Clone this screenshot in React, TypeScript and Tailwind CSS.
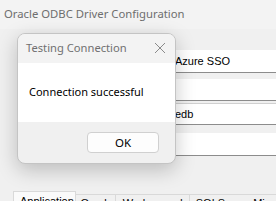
export default function App() {
  return (
    <div className="relative w-[276px] h-[201px] overflow-hidden bg-[#f0f0f0]">
      <div className="h-[29px] flex items-center pl-[4px] bg-[#f3f3f3] text-[11.3px] text-[#6e6e6e] font-['Noto_Sans',sans-serif] whitespace-nowrap">
        Oracle ODBC Driver Configuration
      </div>
      <div className="ml-[120px] mt-[21px] flex flex-col font-['Liberation_Sans',sans-serif] text-[11px] text-black leading-none">
        <div className="h-[23px] bg-white border-b border-[#8c8c8c] flex items-center pl-[55px]">Azure SSO</div>
        <div className="mt-[6px] h-[22px] bg-white border-b border-[#8c8c8c]" />
        <div className="mt-[2px] h-[22px] bg-white border-t border-t-[#d0d0d0] border-b border-[#8c8c8c] flex items-center pl-[55px]">edb</div>
        <div className="mt-[8px] h-[23px] bg-white border-b border-[#8c8c8c]" />
      </div>
      <div className="mt-[35px] pl-[13px] flex items-start font-['Liberation_Sans',sans-serif] text-[11px] text-black leading-[13px] whitespace-nowrap">
        <div className="w-[66px] h-[12px] overflow-hidden border-t border-x border-[#d9d9d9] bg-[#fafafa] pl-[6px] pt-[3px]">Application</div>
        <div className="mt-[3px] w-[41px] h-[9px] overflow-hidden border-t border-r border-[#d9d9d9] pl-[4px] pt-[2px]">Oracle</div>
        <div className="mt-[3px] w-[77px] h-[9px] overflow-hidden border-t border-r border-[#d9d9d9] pl-[7px] pt-[2px]">Workarounds</div>
        <div className="mt-[3px] w-[90px] h-[9px] overflow-hidden border-t border-[#d9d9d9] pl-[6px] pt-[2px]">SQLServer Migration</div>
      </div>

      <div className="absolute left-[17px] top-[33px] w-[159px] h-[131px] rounded-[8px] overflow-hidden border border-[#c4c4c4] bg-[#f0f0f0] shadow-[0_6px_20px_rgba(0,0,0,0.22)] flex flex-col font-['Noto_Sans',sans-serif]">
        <div className="relative h-[29px] flex items-center pl-[8px] text-[11.2px] text-[#707070] bg-[#f3f3f3]">
          Testing Connection
          <svg className="absolute left-[136px] top-[8px]" width="12" height="12" viewBox="0 0 12 12">
            <path d="M1 1 L11 11 M11 1 L1 11" stroke="#8a8a8a" strokeWidth="1" fill="none" />
          </svg>
        </div>
        <div className="h-[59px] bg-white flex items-center pl-[11px] text-[11px] text-black">Connection successful</div>
        <div className="flex-1 flex justify-end items-start pt-[10px] pr-[16px]">
          <div className="w-[72px] h-[21px] rounded-[4px] border border-[#d0d0d0] bg-[#fdfdfd] flex items-center justify-center text-[11.5px] text-black">OK</div>
        </div>
      </div>
    </div>
  );
}
